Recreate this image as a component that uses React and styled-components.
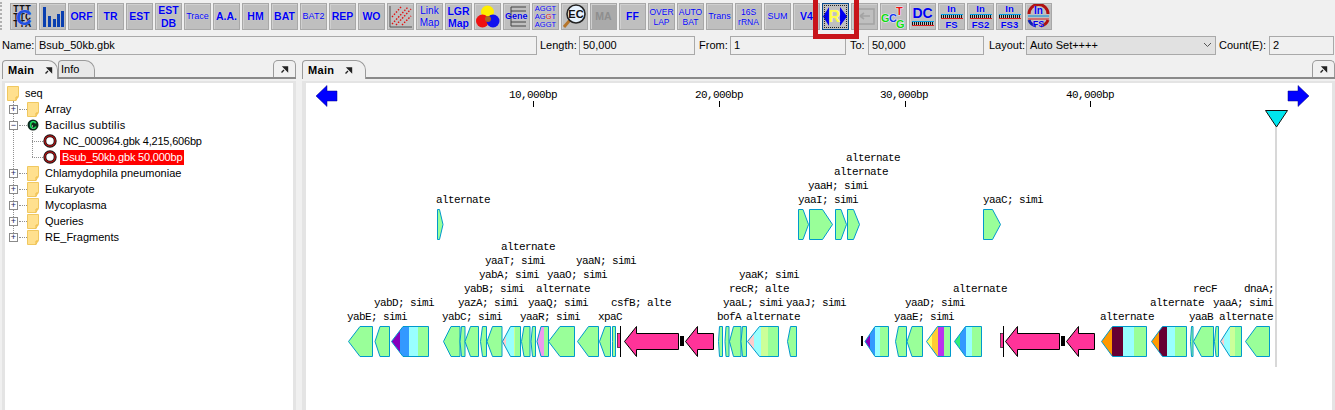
import React from "react";
import styled, {createGlobalStyle} from "styled-components";

const GlobalStyle = createGlobalStyle`
    html, body {
        margin: 0;
        padding: 0;
        background: #f0f0f0;
        overflow: hidden;
    }
    * {
        box-sizing: border-box;
    }
`;

const Page = styled.div`
    position: relative;
    width: 1335px;
    height: 410px;
    overflow: hidden;
    font-family: "Liberation Sans", Arial, sans-serif;
    font-size: 11px;
    color: #000;
`;

const Toolbar = styled.div`
    display: flex;
    gap: 2px;
    height: 35px;
    padding: 3px 0 0 10px;
`;

const ToolBtn = styled.div`
    display: flex;
    flex-direction: column;
    align-items: center;
    justify-content: center;
    width: 27px;
    height: 27px;
    flex: none;
    overflow: hidden;
    background: ${p => (p.$off ? "#aaaaaa" : "#bfbfbf")};
    border: 1px solid #a8a8a8;
    box-shadow: inset 1px 1px 0 #cfcfcf;
    color: ${p => (p.$off ? "#8e8e8e" : "#0000f0")};
    font-weight: ${p => (p.$thin ? 400 : 700)};
    font-size: ${p => p.$size || 10.5}px;
    line-height: ${p => p.$line || 11}px;
    white-space: nowrap;
    text-shadow: ${p => (p.$off ? "none" : "0 0 1px #e4e4ff")};
`;

const SelectedBtn = styled(ToolBtn)`
    border: 1px solid #0a4a8a;
    box-shadow: none;
    outline: 1px dotted #222;
    outline-offset: -3px;
`;

const Highlight = styled.div`
    position: absolute;
    left: 813px;
    top: -5px;
    width: 46px;
    height: 44px;
    border: 5px solid #c8141a;
    pointer-events: none;
`;

const Grip = styled.div`
    position: absolute;
    left: 0;
    top: 2px;
    width: 2px;
    height: 28px;
    border-left: 2px dotted #b0b0b0;
`;

const FieldRow = styled.div`
    display: flex;
    align-items: center;
    height: 20px;
    margin-bottom: 5px;
    padding-left: 2px;
`;

const FieldLabel = styled.label`
    width: ${p => p.$w}px;
    flex: none;
    padding-left: ${p => p.$pad || 0}px;
    font-size: 11px;
`;

const Field = styled.div`
    display: flex;
    align-items: center;
    justify-content: space-between;
    width: ${p => p.$w}px;
    height: 19px;
    flex: none;
    padding: 0 3px;
    border: 1px solid #a9a9a9;
    background: ${p => (p.$select ? "#e1e1e1" : "#f0f0f0")};
    font-size: 11px;
`;

const Panels = styled.div`
    display: flex;
    gap: 6px;
    height: 350px;
    padding-left: 2px;
`;

const Panel = styled.section`
    display: flex;
    flex-direction: column;
    width: ${p => (p.$grow ? "auto" : "294px")};
    flex: ${p => (p.$grow ? 1 : "none")};
`;

const TabBar = styled.div`
    display: flex;
    align-items: flex-end;
    justify-content: space-between;
    height: 19px;
    border-bottom: 2px solid #8a8a8a;
`;

const Tabs = styled.div`
    display: flex;
    align-items: flex-end;
`;

const Tab = styled.div`
    display: flex;
    align-items: center;
    gap: 10px;
    height: ${p => (p.$active ? 19 : 17)}px;
    margin-bottom: ${p => (p.$active ? -2 : 0)}px;
    padding: 0 0 0 ${p => (p.$active ? 5 : 2)}px;
    width: ${p => p.$w}px;
    border: 1px solid #9a9a9a;
    border-bottom: none;
    border-radius: 4px 10px 0 0;
    background: ${p => (p.$active ? "#f0f0f0" : "#e8e8e8")};
    font-weight: ${p => (p.$active ? 700 : 400)};
    font-size: 11px;
    letter-spacing: ${p => (p.$active ? "0.3px" : "0")};
`;

const PinTab = styled.div`
    display: flex;
    align-items: center;
    justify-content: center;
    width: 23px;
    height: 17px;
    border: 1px solid #9a9a9a;
    border-bottom: none;
    border-radius: 5px 5px 0 0;
`;

const PanelBody = styled.div`
    position: relative;
    flex: 1;
    margin-top: 2px;
    background: #fff;
    border-top: 2px solid #e4e4e4;
    border-left: ${p => (p.$wide ? 4 : 3)}px solid #e4e4e4;
    border-right: 3px solid #e4e4e4;
    overflow: hidden;
`;

const Tree = styled.div`
    position: relative;
    padding: 2px 0 0 2px;
    &::before {
        content: "";
        position: absolute;
        left: 8px;
        top: 18px;
        height: 140px;
        border-left: 1px dotted #909090;
    }
`;

const TreeRow = styled.div`
    position: relative;
    display: flex;
    align-items: center;
    height: 16px;
    padding-left: ${p => p.$indent}px;
`;

const BranchRow = styled(TreeRow)`
    &::before {
        content: "";
        position: absolute;
        left: ${p => p.$indent}px;
        top: -8px;
        height: 16px;
        border-left: 1px dotted #909090;
    }
`;

const TreeText = styled.span`
    margin-left: ${p => p.$gap ?? 4}px;
    padding: 0 2px;
    line-height: 15px;
    white-space: nowrap;
    letter-spacing: ${p => p.$track || 0}px;
    color: ${p => (p.$selected ? "#fff" : "#000")};
    background: ${p => (p.$selected ? "#ff0000" : "transparent")};
`;

const Expander = styled.span`
    display: flex;
    align-items: center;
    justify-content: center;
    width: 9px;
    height: 9px;
    margin-left: 2px;
    margin-right: 1px;
    flex: none;
    border: 1px solid #8a8a8a;
    background: #fff;
    color: #1a2a60;
    font-size: 9px;
    line-height: 7px;
`;

const Dots = styled.span`
    display: block;
    width: ${p => p.$w}px;
    flex: none;
    border-top: 1px dotted #909090;
`;

const Canvas = styled.div`
    position: relative;
    width: 100%;
    height: 100%;
`;

const Drawing = styled.svg`
    position: absolute;
    left: 0;
    top: 0;
`;

const SeqLabel = styled.span`
    position: absolute;
    left: ${p => p.$x}px;
    top: ${p => p.$y}px;
    font-family: "Liberation Mono", "DejaVu Sans Mono", monospace;
    font-size: 11px;
    letter-spacing: -0.6px;
    line-height: 12px;
    white-space: pre;
`;

const Stacked = styled.span`
    display: block;
    text-align: center;
`;

const RedLetter = styled.span`
    color: #e01010;
`;

const Ruled = styled.span`
    display: block;
    width: 22px;
    height: 5px;
    flex: none;
    margin: 1px 0;
    border-top: 1px solid #00a0e8;
    border-bottom: 1px solid #e02020;
    background: repeating-linear-gradient(90deg, #111 0 1px, #bfbfbf 1px 2px);
`;

const GREEN = "#99ff99";
const CYAN = "#99ffff";
const BLUE = "#3399ff";
const PALE = "#ccff99";
const PINK = "#ffcccc";
const PURPLE = "#8800bb";
const MAROON = "#660033";
const ORANGE = "#ff9900";

// origin of the right canvas on the page
const OX = 306;
const OY = 83;

const lowerGenes = [
    {t: 348.5, b: 360, e: 372.5},
    {t: 375, b: 380, e: 389.5},
    {t: 391.5, b: 403, e: 428.5, bands: [[400, PURPLE], [409, BLUE], [418, CYAN], [430, GREEN]]},
    {t: 443.5, b: 451, e: 460},
    {t: 460, b: 461.5, e: 465},
    {t: 465, b: 470.5, e: 478.5},
    {t: 480.5, b: 482.5, e: 486.5},
    {t: 487, b: 492.5, e: 502},
    {t: 502.5, b: 510.5, e: 520.5, bands: [[506, PINK], [514, CYAN], [515, PALE], [522, GREEN]]},
    {t: 521.5, b: 524, e: 530},
    {t: 531, b: 532.5, e: 535.5},
    {t: 537, b: 541, e: 548.5, bands: [[544, "#ee99ee"], [550, GREEN]]},
    {t: 548.5, b: 560, e: 574.5},
    {t: 577.5, b: 588.5, e: 598.5},
    {t: 599.5, b: 605, e: 610.5},
    {t: 612.5, b: 612.5, e: 615.5},
    {t: 718.5, b: 719.5, e: 722.5},
    {t: 725, b: 726, e: 729},
    {t: 729.5, b: 733.5, e: 741},
    {t: 741, b: 742.5, e: 746.5},
    {t: 747.5, b: 759.5, e: 778.5, bands: [[754, PINK], [761, CYAN], [768, PALE], [780, GREEN]]},
    {t: 787.5, b: 790.5, e: 796.5},
    {t: 865, b: 875, e: 888.5, bands: [[870, PURPLE], [875, BLUE], [880, CYAN], [890, GREEN]]},
    {t: 895.5, b: 898.5, e: 906.5},
    {t: 907, b: 912, e: 922.5},
    {t: 926.5, b: 937.5, e: 950.5, bands: [[932, "#ffff66"], [938, "#ffcc33"], [944, "#bb33ee"], [952, GREEN]]},
    {t: 954.5, b: 965.5, e: 981.5, bands: [[960, "#33ee77"], [966, BLUE], [972, CYAN], [983, GREEN]]},
    {t: 1101.5, b: 1112.5, e: 1146.5, bands: [[1112, ORANGE], [1123, MAROON], [1134, CYAN], [1148, GREEN]]},
    {t: 1151.5, b: 1162.5, e: 1186.5, bands: [[1159, ORANGE], [1167, MAROON], [1175, CYAN], [1188, GREEN]]},
    {t: 1190.5, b: 1191.5, e: 1193},
    {t: 1193.5, b: 1201.5, e: 1213.5},
    {t: 1214.5, b: 1216, e: 1218.5},
    {t: 1220.5, b: 1230, e: 1241.5, bands: [[1224, PINK], [1230, CYAN], [1235, PALE], [1243, GREEN]]},
    {t: 1245.5, b: 1256.5, e: 1269.5}
];

const upperGenes = [
    {s: 798.5, b: 803, t: 808.5},
    {s: 809.5, b: 822.5, t: 832.5},
    {s: 835.5, b: 841, t: 846.5},
    {s: 847.5, b: 853.5, t: 859.5},
    {s: 983.5, b: 992.5, t: 1000.5},
    {s: 437.5, b: 439.5, t: 443}
];

const rrnaArrows = [
    {t: 624.5, b: 636.5, e: 678.5},
    {t: 685.5, b: 697.5, e: 713.5},
    {t: 1005.5, b: 1017.5, e: 1059.5},
    {t: 1066.5, b: 1078.5, e: 1094.5}
];

const labels = [
    ["alternate", 846, 158], ["alternate", 834, 172], ["yaaH; simi", 808, 186],
    ["yaaI; simi", 798, 200], ["yaaC; simi", 983, 200], ["alternate", 436, 200],
    ["alternate", 501, 247],
    ["yaaT; simi", 485, 261], ["yaaN; simi", 576, 261],
    ["yabA; simi", 479, 275], ["yaaO; simi", 547, 275], ["yaaK; simi", 739, 275],
    ["yabB; simi", 464, 289], ["alternate", 536, 289], ["recR; alte", 729, 289],
    ["alternate", 953, 289], ["recF", 1193, 289], ["dnaA;", 1244, 289],
    ["yabD; simi", 374, 303], ["yazA; simi", 458, 303], ["yaaQ; simi", 528, 303],
    ["csfB; alte", 611, 303], ["yaaL; simi", 723, 303], ["yaaJ; simi", 786, 303],
    ["yaaD; simi", 905, 303], ["alternate", 1150, 303], ["yaaA; simi", 1213, 303],
    ["yabE; simi", 347, 317], ["yabC; simi", 442, 317], ["yaaR; simi", 520, 317],
    ["xpaC", 598, 317], ["bofA", 717, 317], ["alternate", 746, 317],
    ["yaaE; simi", 894, 317], ["alternate", 1100, 317], ["yaaB", 1189, 317],
    ["alternate", 1219, 317],
    ["10,000bp", 509, 95], ["20,000bp", 695, 95], ["30,000bp", 880, 95], ["40,000bp", 1066, 95]
];

const STROKE = "#0099cc";

const Gene = ({g, id}) => {
    const top = 326.5;
    const bot = 356.5;
    const points = `${g.t},341.5 ${g.b},${top} ${g.e},${top} ${g.e},${bot} ${g.b},${bot}`;
    if (!g.bands) {
        return <polygon points={points} fill={GREEN} stroke={STROKE} />;
    }
    let from = g.t;
    return (
        <g>
            <clipPath id={id}>
                <polygon points={points} />
            </clipPath>
            <g clipPath={`url(#${id})`}>
                {g.bands.map(([to, color]) => {
                    const r = <rect key={to} x={from} y={top} width={to - from} height={bot - top} fill={color} />;
                    from = to;
                    return r;
                })}
            </g>
            <polygon points={points} fill="none" stroke={STROKE} />
        </g>
    );
};

const GeneMap = () => (
    <Drawing width={1029} height={327} viewBox={`${OX} ${OY} 1029 327`}>
        <g fill="#0000ff" stroke="#000080" strokeWidth="0.5">
            <polygon points="316,96 327,85.5 327,91 337,91 337,101 327,101 327,106.5" />
            <polygon points="1309,96 1298,85.5 1298,91 1288,91 1288,101 1298,101 1298,106.5" />
        </g>
        <rect x="1275" y="127" width="2" height="240" fill="#d8d8d8" />
        <polygon points="1265.5,110.5 1287.5,110.5 1276.5,127" fill="#00e5ee" stroke="#111" strokeWidth="1" />
        {[533, 719, 905, 1090].map(x => (
            <rect key={x} x={x} y="101" width="1" height="6" fill="#000" />
        ))}
        {upperGenes.map(g => (
            <polygon
                key={g.s}
                points={`${g.s},209.5 ${g.b},209.5 ${g.t},224.5 ${g.b},239.5 ${g.s},239.5`}
                fill={GREEN}
                stroke={STROKE}
            />
        ))}
        {lowerGenes.map((g, i) => (
            <Gene key={g.t} g={g} id={`gene-${i}`} />
        ))}
        {rrnaArrows.map(a => (
            <polygon
                key={a.t}
                points={`${a.t},341.5 ${a.b},326.5 ${a.b},333.5 ${a.e},333.5 ${a.e},349.5 ${a.b},349.5 ${a.b},356.5`}
                fill="#ff3399"
                stroke="#000"
            />
        ))}
        {[620, 1003].map(x => (
            <g key={x}>
                <rect x={x - 2.5} y="333.5" width="3" height="14" fill="#ff3399" stroke="#000" strokeWidth="0.6" />
                <rect x={x} y="326" width="1" height="31" fill="#000" />
            </g>
        ))}
        <rect x="680" y="336" width="4" height="10" fill="#000" />
        <rect x="861" y="336" width="2" height="10" fill="#000" />
        <rect x="1061" y="336" width="4" height="10" fill="#000" />
    </Drawing>
);

const Pin = () => (
    <svg width="9" height="9" viewBox="0 0 9 9">
        <path d="M1.5 7.5 L4 5 M3.5 2 H7.5 V6 Z" stroke="#222" strokeWidth="1.4" fill="#222" />
    </svg>
);

const Folder = () => (
    <svg width="12" height="15" viewBox="0 0 12 15">
        <path d="M0.5 0.5 H11.5 V10 L9 14.5 H0.5 Z" fill="#ffe08e" stroke="#f0c860" />
        <path d="M9 14.5 V11 H11.5" fill="none" stroke="#eebb44" />
    </svg>
);

const Ring = () => (
    <svg width="14" height="14" viewBox="0 0 14 14">
        <circle cx="7" cy="7" r="5.2" fill="#fff" stroke="#1a1a1a" strokeWidth="3" />
        <circle cx="7" cy="7" r="5.2" fill="none" stroke="#bb1111" strokeWidth="1.2" />
    </svg>
);

const Chromosome = () => (
    <svg width="12" height="12" viewBox="0 0 12 12">
        <circle cx="6" cy="6" r="5.5" fill="#0a2a1a" />
        <text x="6" y="9.5" textAnchor="middle" fontSize="10" fontWeight="700" fill="#22dd66" fontFamily="Liberation Sans">
            C
        </text>
    </svg>
);

const TreeNode = ({label, open, folder = true, track}) => (
    <TreeRow $indent={0}>
        <Expander>{open ? "−" : "+"}</Expander>
        <Dots $w={8} />
        {folder ? <Folder /> : <Chromosome />}
        <TreeText $track={track}>{label}</TreeText>
    </TreeRow>
);

const SeqIcon = () => (
    <svg width="25" height="25" viewBox="0 0 25 25">
        <g fontFamily="Liberation Mono" fontSize="10" fontWeight="700" fill="#111">
            <text x="2" y="8">TTT</text>
            <text x="2" y="15.5">TTC</text>
            <text x="2" y="23">TTA</text>
        </g>
        <text x="5" y="21" fontFamily="Liberation Sans" fontSize="22" fontWeight="700" fill="#2050e0">C</text>
    </svg>
);

const BarsIcon = () => (
    <svg width="25" height="25" viewBox="0 0 25 25">
        <g fill="#0a3fb0">
            <rect x="3" y="3" width="3" height="20" />
            <rect x="8" y="12" width="3" height="11" />
            <rect x="13" y="15" width="3" height="8" />
            <rect x="17" y="10" width="3" height="13" />
            <rect x="21" y="7" width="3" height="16" />
        </g>
    </svg>
);

const DotIcon = () => (
    <svg width="25" height="25" viewBox="0 0 25 25">
        <path d="M2 2 V23 H24" fill="none" stroke="#555" strokeWidth="1" />
        <path d="M4 20 L20 3 M8 21 L23 5 M4 13 L13 3 M14 21 L23 12" stroke="#e01010" strokeWidth="1.4" strokeDasharray="1.5 1.5" />
    </svg>
);

const ColorIcon = () => (
    <svg width="25" height="25" viewBox="0 0 25 25">
        <circle cx="12.5" cy="8" r="6.5" fill="#ffee00" />
        <circle cx="7.5" cy="17" r="6.5" fill="#ee1111" />
        <circle cx="18" cy="17" r="6.5" fill="#1111ee" />
        <circle cx="13" cy="15" r="3" fill="#aa6622" />
    </svg>
);

const GeneIcon = () => (
    <svg width="25" height="25" viewBox="0 0 25 25">
        <path d="M7 3 H22 M7 7 H22 M7 18 H22 M7 22 H22 M7 3 V22 M4 12 H7" fill="none" stroke="#444" strokeWidth="1" />
        <text x="1" y="15" fontFamily="Liberation Sans" fontSize="9" fontWeight="700" fill="#0000e0">Gene</text>
    </svg>
);

const EcIcon = () => (
    <svg width="25" height="25" viewBox="0 0 25 25">
        <path d="M2 23 L8 16" stroke="#b5742a" strokeWidth="3" />
        <circle cx="14" cy="10" r="9" fill="#e8f4ff" stroke="#222" strokeWidth="1.6" />
        <text x="14" y="14" textAnchor="middle" fontFamily="Liberation Sans" fontSize="11" fontWeight="700" fill="#111">EC</text>
    </svg>
);

const DisabledIcon = () => (
    <svg width="25" height="25" viewBox="0 0 25 25">
        <path d="M3 5 H22 V20 H3 Z M8 12 H18 M8 12 L12 9 M8 12 L12 15" fill="none" stroke="#a4a4a4" strokeWidth="1.6" />
    </svg>
);

const ReverseIcon = () => (
    <svg width="25" height="25" viewBox="0 0 25 25">
        <polygon points="0,12.5 6,3 6,22" fill="#0000ee" />
        <polygon points="24,12.5 17,3 17,22" fill="#0000ee" />
        <text x="11.5" y="18" textAnchor="middle" fontFamily="Liberation Sans" fontSize="16" fontWeight="700" fill="#ffff44">
            R
        </text>
    </svg>
);

const GctgIcon = () => (
    <svg width="25" height="25" viewBox="0 0 25 25">
        <g fontFamily="Liberation Sans" fontSize="11" fontWeight="700" stroke="#fff" strokeWidth="0.6" paintOrder="stroke">
            <text x="0" y="18" fill="#11dd11">G</text>
            <text x="8" y="18" fill="#1133ee">C</text>
            <text x="15" y="11" fill="#ee1111">T</text>
            <text x="15" y="23.5" fill="#11dd11">G</text>
        </g>
    </svg>
);

const RingOver = () => (
    <svg width="25" height="25" viewBox="0 0 25 25">
        <path d="M3 10 A9.5 9.5 0 0 1 22 10 M22 16 A9.5 9.5 0 0 1 15 22" fill="none" stroke="#b01010" strokeWidth="3" />
        <path d="M3 16 A9.5 9.5 0 0 0 10 22" fill="none" stroke="#1020b0" strokeWidth="3" />
        <path d="M2 12 H23" stroke="#0090e0" />
        <path d="M2 15 H23" stroke="#e02020" />
        <text x="12.5" y="10" textAnchor="middle" fontFamily="Liberation Sans" fontSize="10" fontWeight="700" fill="#0000ee">In</text>
        <text x="12.5" y="23" textAnchor="middle" fontFamily="Liberation Sans" fontSize="9" fontWeight="700" fill="#0000ee">FS</text>
    </svg>
);

const TextBtn = ({lines, ...rest}) => (
    <ToolBtn {...rest}>
        {lines.map(l => (
            <Stacked key={l}>{l}</Stacked>
        ))}
    </ToolBtn>
);

const App = () => (
    <Page>
        <GlobalStyle />
        <Grip />
        <Toolbar>
            <ToolBtn><SeqIcon /></ToolBtn>
            <ToolBtn><BarsIcon /></ToolBtn>
            <TextBtn lines={["ORF"]} />
            <TextBtn lines={["TR"]} />
            <TextBtn lines={["EST"]} />
            <TextBtn lines={["EST", "DB"]} $line={13} />
            <TextBtn lines={["Trace"]} $size={9} $thin />
            <TextBtn lines={["A.A."]} />
            <TextBtn lines={["HM"]} />
            <TextBtn lines={["BAT"]} />
            <TextBtn lines={["BAT2"]} $size={9} $thin />
            <TextBtn lines={["REP"]} />
            <TextBtn lines={["WO"]} />
            <ToolBtn><DotIcon /></ToolBtn>
            <TextBtn lines={["Link", "Map"]} $size={10} $line={12} $thin />
            <TextBtn lines={["LGR", "Map"]} $line={12} />
            <ToolBtn><ColorIcon /></ToolBtn>
            <ToolBtn><GeneIcon /></ToolBtn>
            <ToolBtn $size={7.5} $line={8} $thin>
                <Stacked>AGGT</Stacked>
                <Stacked>AG<RedLetter>G</RedLetter>T</Stacked>
                <Stacked>AGGT</Stacked>
            </ToolBtn>
            <ToolBtn><EcIcon /></ToolBtn>
            <TextBtn lines={["MA"]} $off />
            <TextBtn lines={["FF"]} />
            <TextBtn lines={["OVER", "LAP"]} $size={8.5} $line={10} $thin />
            <TextBtn lines={["AUTO", "BAT"]} $size={8.5} $line={10} $thin />
            <TextBtn lines={["Trans"]} $size={9} $thin />
            <TextBtn lines={["16S", "rRNA"]} $size={8.5} $line={10} $thin />
            <TextBtn lines={["SUM"]} $size={9} $thin />
            <TextBtn lines={["V4"]} />
            <SelectedBtn><ReverseIcon /></SelectedBtn>
            <ToolBtn><DisabledIcon /></ToolBtn>
            <ToolBtn><GctgIcon /></ToolBtn>
            <ToolBtn $size={14} $line={14}>
                <Stacked>DC</Stacked>
                <Ruled />
            </ToolBtn>
            {["FS", "FS2", "FS3"].map(n => (
                <ToolBtn key={n} $size={9.5} $line={9}>
                    <Stacked>In</Stacked>
                    <Ruled />
                    <Stacked>{n}</Stacked>
                </ToolBtn>
            ))}
            <ToolBtn><RingOver /></ToolBtn>
        </Toolbar>
        <Highlight />
        <FieldRow>
            <FieldLabel $w={33}>Name:</FieldLabel>
            <Field $w={502}>Bsub_50kb.gbk</Field>
            <FieldLabel $w={42} $pad={3}>Length:</FieldLabel>
            <Field $w={116}>50,000</Field>
            <FieldLabel $w={35} $pad={4}>From:</FieldLabel>
            <Field $w={116}>1</Field>
            <FieldLabel $w={22} $pad={4}>To:</FieldLabel>
            <Field $w={116}>50,000</Field>
            <FieldLabel $w={42} $pad={5}>Layout:</FieldLabel>
            <Field $w={190} $select>
                Auto Set++++
                <svg width="9" height="6" viewBox="0 0 9 6">
                    <path d="M1 1 L4.5 4.5 L8 1" fill="none" stroke="#555" />
                </svg>
            </Field>
            <FieldLabel $w={53} $pad={3}>Count(E):</FieldLabel>
            <Field $w={65}>2</Field>
        </FieldRow>
        <Panels>
            <Panel>
                <TabBar>
                    <Tabs>
                        <Tab $active $w={56}>Main <Pin /></Tab>
                        <Tab $w={37}>Info</Tab>
                    </Tabs>
                    <PinTab><Pin /></PinTab>
                </TabBar>
                <PanelBody>
                    <Tree>
                        <TreeRow $indent={0}>
                            <Folder />
                            <TreeText>seq</TreeText>
                        </TreeRow>
                        <TreeNode label="Array" />
                        <TreeNode label="Bacillus subtilis" open folder={false} track={0.35} />
                        <BranchRow $indent={25}>
                            <Dots $w={11} />
                            <Ring />
                            <TreeText $track={-0.2}>NC_000964.gbk 4,215,606bp</TreeText>
                        </BranchRow>
                        <BranchRow $indent={25}>
                            <Dots $w={11} />
                            <Ring />
                            <TreeText $gap={3} $selected $track={-0.2}>Bsub_50kb.gbk 50,000bp</TreeText>
                        </BranchRow>
                        <TreeNode label="Chlamydophila pneumoniae" />
                        <TreeNode label="Eukaryote" />
                        <TreeNode label="Mycoplasma" />
                        <TreeNode label="Queries" />
                        <TreeNode label="RE_Fragments" />
                    </Tree>
                </PanelBody>
            </Panel>
            <Panel $grow>
                <TabBar>
                    <Tabs>
                        <Tab $active $w={64}>Main <Pin /></Tab>
                    </Tabs>
                    <PinTab><Pin /></PinTab>
                </TabBar>
                <PanelBody $wide>
                    <Canvas>
                        <GeneMap />
                        {labels.map(([text, x, y]) => (
                            <SeqLabel key={`${text}${x}`} $x={x - OX} $y={y - OY - 6}>{text}</SeqLabel>
                        ))}
                    </Canvas>
                </PanelBody>
            </Panel>
        </Panels>
    </Page>
);

export default App;
